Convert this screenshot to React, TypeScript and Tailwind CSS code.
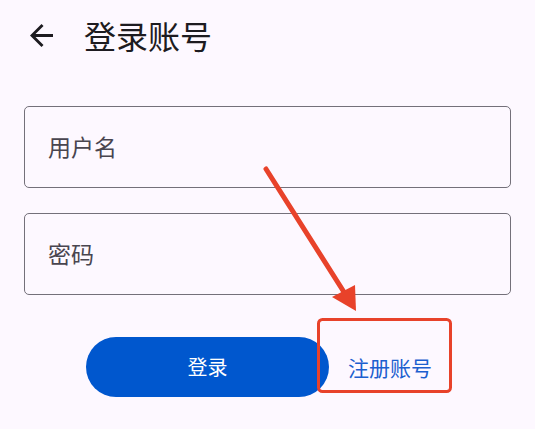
import React from 'react';

const font = { fontFamily: '"Noto Sans CJK SC", "Noto Sans", sans-serif' };

const Field = ({ label }: { label: string }) => (
  <div className="h-[82px] rounded-[5px] border border-[#74707a] flex items-center px-[23px]">
    <span className="text-[23px] text-[#49454f] leading-none -mt-[2px]">{label}</span>
  </div>
);

const App = () => {
  return (
    <div className="relative w-[535px] h-[429px] bg-[#fdf8ff] overflow-hidden" style={font}>
      <header className="flex items-center h-[70px] pl-[30px]">
        <svg width="23" height="23" viewBox="4 4 16 16" className="text-[#1d1b20]">
          <path fill="currentColor" d="M20 11H7.83l5.59-5.59L12 4l-8 8 8 8 1.41-1.41L7.83 13H20v-2z" />
        </svg>
        <h1 className="ml-[31px] text-[32px] text-[#1d1b20] leading-none">登录账号</h1>
      </header>

      <div className="flex flex-col gap-[25px] mx-[24px] mt-[36px]">
        <Field label="用户名" />
        <Field label="密码" />
      </div>

      <div className="flex items-center mt-[42px] pl-[86px]">
        <button className="w-[243px] h-[60px] rounded-full bg-[#0057ce] text-white text-[20px] flex items-center justify-center">
          登录
        </button>
        <button className="ml-[19px] text-[21px] text-[#1c5fcf] leading-none">注册账号</button>
      </div>

      {/* annotation overlay */}
      <svg className="absolute inset-0 pointer-events-none" width="535" height="429">
        <line x1="266" y1="169" x2="349" y2="300" stroke="#e8422a" strokeWidth="5" strokeLinecap="round" />
        <polygon points="332,297 355,285 356,311" fill="#e8422a" />
        <rect x="318.5" y="319.5" width="132" height="72" rx="4" fill="none" stroke="#e8422a" strokeWidth="3" />
      </svg>
    </div>
  );
};

export default App;
